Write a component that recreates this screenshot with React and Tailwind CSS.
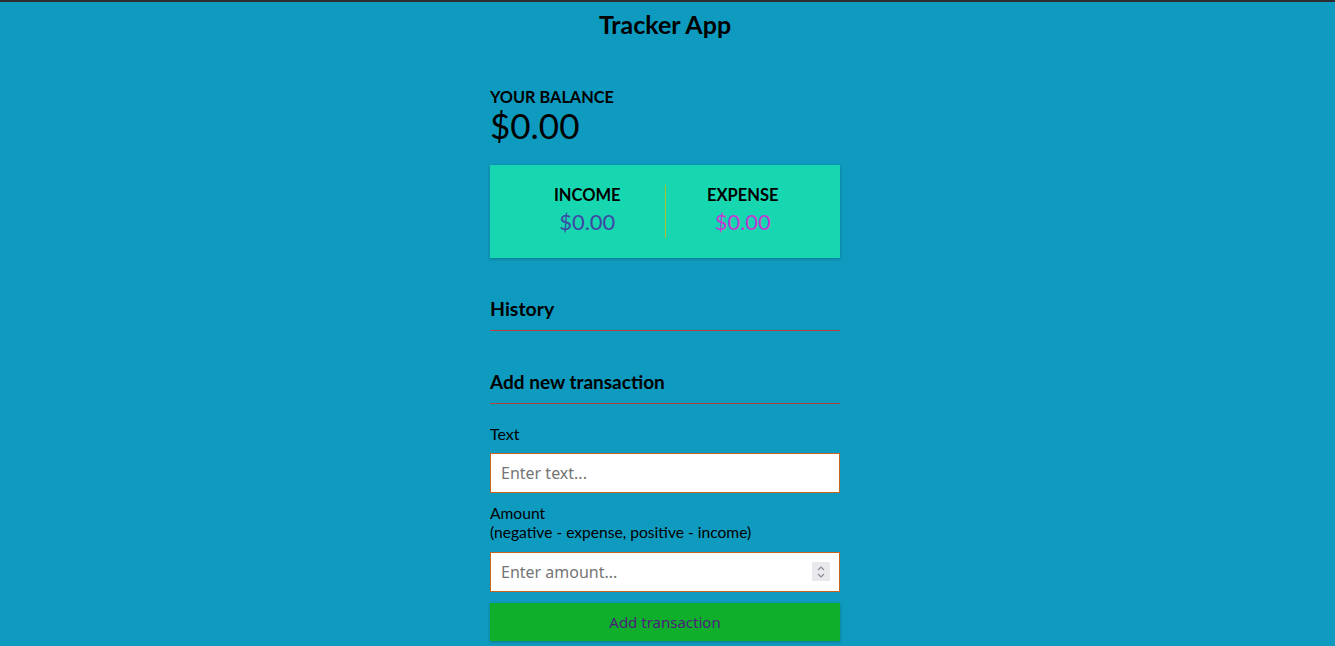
import React from "react";

export default function App() {
  return (
    <div className="min-h-[646px] bg-[#0f9bbf] border-t-2 border-[#2d2d30] text-black font-['Lato',sans-serif] pr-[5px]">
      <h2 className="text-center text-[25px] font-bold leading-[28px] pt-[8px]">
        Tracker App
      </h2>
      <div className="w-[350px] mx-auto mt-[50px]">
        <h4 className="text-[16.3px] font-bold uppercase leading-[18px]">Your balance</h4>
        <h1 className="text-[35px] leading-[40px] -mt-[1px]">$0.00</h1>

        <div className="mt-[20px] bg-[#17d7b0] shadow-[0_1px_3px_rgba(0,0,0,0.25)] h-[93px] flex items-start pt-[20px] px-[20px]">
          <div className="flex-1 text-center">
            <h4 className="text-[16.5px] font-bold uppercase leading-[20px]">Income</h4>
            <p className="mt-[4px] text-[22px] text-[#3d49a4] leading-[26px]">$0.00</p>
          </div>
          <div className="w-[1px] shrink-0 h-[53px] bg-[#a9bf2c]"></div>
          <div className="flex-1 text-center">
            <h4 className="text-[16.5px] font-bold uppercase leading-[20px]">Expense</h4>
            <p className="mt-[4px] text-[22px] text-[#c23ad3] leading-[26px]">$0.00</p>
          </div>
        </div>

        <h3 className="mt-[38px] text-[19.5px] font-bold leading-[26px] pb-[8px] border-b border-[#b5413a]">
          History
        </h3>
        <ul className="mb-[38px]"></ul>

        <h3 className="text-[19px] font-bold leading-[26px] pb-[8px] border-b border-[#b5413a]">
          Add new transaction
        </h3>
        <form className="mt-[20px]">
          <label className="block text-[16px] leading-[20px]">Text</label>
          <input
            type="text"
            placeholder="Enter text..."
            className="mt-[9px] block w-full h-[40px] bg-white border border-[#c8641e] px-[10px] text-[16px] placeholder:text-[#757575] font-['Noto_Sans',sans-serif] outline-none"
          />
          <label className="block mt-[11px] text-[15.6px] leading-[19px]">
            Amount
            <br />
            (negative - expense, positive - income)
          </label>
          <div className="relative mt-[10px]">
            <input
              type="text"
              placeholder="Enter amount..."
              className="block w-full h-[40px] bg-white border border-[#c8641e] px-[10px] text-[16px] placeholder:text-[#757575] font-['Noto_Sans',sans-serif] outline-none"
            />
            <div className="absolute right-[10px] top-[10px] w-[18px] h-[19px] bg-[#e9e9ed] flex items-center justify-center">
              <svg width="10" height="14" viewBox="0 0 10 14" fill="none" stroke="#8a8a92" strokeWidth="1.2">
                <path d="M2 5 L5 2 L8 5" />
                <path d="M2 9 L5 12 L8 9" />
              </svg>
            </div>
          </div>
          <button
            type="button"
            className="mt-[11px] block w-full h-[38px] bg-[#0fae2b] text-[#4b1e7a] text-[15px] font-['Noto_Sans',sans-serif] shadow-[0_1px_3px_rgba(0,0,0,0.25)]"
          >
            Add transaction
          </button>
        </form>
      </div>
    </div>
  );
}
